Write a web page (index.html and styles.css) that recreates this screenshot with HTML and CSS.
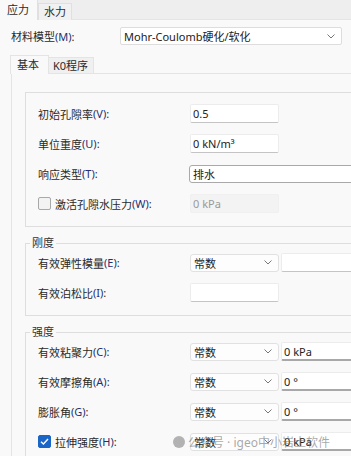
FILE: index.html
```html
<!DOCTYPE html>
<html lang="zh-CN">
<head>
    <meta charset="UTF-8">
    <title>材料属性</title>
    <link rel="stylesheet" href="styles.css">
</head>
<body>

<div class="window">
    <!-- Top tabs -->
    <div class="tabbar">
        <div class="tab active">应力</div>
        <div class="tab">水力</div>
    </div>

    <div class="page">
        <div class="model-row">
            <span class="label">材料模型<span class="key">(M)</span>:</span>
            <div class="select model-select">
                <span>Mohr-Coulomb硬化/软化</span>
                <svg class="chevron" width="8" height="5" viewBox="0 0 8 5"><path d="M0.5 0.5 L4 4 L7.5 0.5" fill="none" stroke="#777" stroke-width="1"/></svg>
            </div>
        </div>

        <div class="subtabs">
            <div class="subtab active">基本</div>
            <div class="subtab">K0程序</div>
        </div>

        <div class="panel">
            <!-- General -->
            <div class="group first">
                <div class="row">
                    <span class="label">初始孔隙率<span class="key">(V)</span>:</span>
                    <div class="input">0.5</div>
                </div>
                <div class="row">
                    <span class="label">单位重度<span class="key">(U)</span>:</span>
                    <div class="input">0 kN/m³</div>
                </div>
                <div class="row">
                    <span class="label">响应类型<span class="key">(T)</span>:</span>
                    <div class="select response">
                        <span>排水</span>
                    </div>
                </div>
                <div class="row">
                    <span class="label"><span class="checkbox"></span>激活孔隙水压力<span class="key">(W)</span>:</span>
                    <div class="input disabled">0 kPa</div>
                </div>
            </div>

            <!-- Stiffness -->
            <fieldset class="group">
                <legend>刚度</legend>
                <div class="row">
                    <span class="label">有效弹性模量<span class="key">(E)</span>:</span>
                    <div class="select small">
                        <span>常数</span>
                        <svg class="chevron" width="8" height="5" viewBox="0 0 8 5"><path d="M0.5 0.5 L4 4 L7.5 0.5" fill="none" stroke="#777" stroke-width="1"/></svg>
                    </div>
                    <div class="input value"></div>
                </div>
                <div class="row">
                    <span class="label">有效泊松比<span class="key">(I)</span>:</span>
                    <div class="input"></div>
                </div>
            </fieldset>

            <!-- Strength -->
            <fieldset class="group">
                <legend>强度</legend>
                <div class="row">
                    <span class="label">有效粘聚力<span class="key">(C)</span>:</span>
                    <div class="select small">
                        <span>常数</span>
                        <svg class="chevron" width="8" height="5" viewBox="0 0 8 5"><path d="M0.5 0.5 L4 4 L7.5 0.5" fill="none" stroke="#777" stroke-width="1"/></svg>
                    </div>
                    <div class="input value dark">0 kPa</div>
                </div>
                <div class="row">
                    <span class="label">有效摩擦角<span class="key">(A)</span>:</span>
                    <div class="select small">
                        <span>常数</span>
                        <svg class="chevron" width="8" height="5" viewBox="0 0 8 5"><path d="M0.5 0.5 L4 4 L7.5 0.5" fill="none" stroke="#777" stroke-width="1"/></svg>
                    </div>
                    <div class="input value dark">0 °</div>
                </div>
                <div class="row">
                    <span class="label">膨胀角<span class="key">(G)</span>:</span>
                    <div class="select small">
                        <span>常数</span>
                        <svg class="chevron" width="8" height="5" viewBox="0 0 8 5"><path d="M0.5 0.5 L4 4 L7.5 0.5" fill="none" stroke="#777" stroke-width="1"/></svg>
                    </div>
                    <div class="input value dark">0 °</div>
                </div>
                <div class="row">
                    <span class="label"><span class="checkbox checked"><svg width="11" height="11" viewBox="0 0 11 11"><path d="M2 5.8 L4.4 8 L9 3" fill="none" stroke="#fff" stroke-width="1.4"/></svg></span>拉伸强度<span class="key">(H)</span>:</span>
                    <div class="select small">
                        <span>常数</span>
                        <svg class="chevron" width="8" height="5" viewBox="0 0 8 5"><path d="M0.5 0.5 L4 4 L7.5 0.5" fill="none" stroke="#777" stroke-width="1"/></svg>
                    </div>
                    <div class="input value dark">0 kPa</div>
                </div>
            </fieldset>
        </div>
    </div>

    <!-- Watermark overlay -->
    <div class="watermark">
        <span class="wm-icon"></span>
        <span>公众号 · igeo中小岩土软件</span>
    </div>
</div>

</body>
</html>
```

FILE: styles.css
```css
/* General body styling */
body {
    margin: 0;
    font-family: 'Noto Sans', 'Noto Sans CJK SC', sans-serif;
    font-size: 11px;
    color: #2a2a2a;
    background-color: #f9f9f9;
}

.window {
    position: relative;
    width: 351px;
    height: 456px;
    overflow: hidden;
    background-color: #f9f9f9;
}

/* Top tab strip */
.tabbar {
    display: flex;
    align-items: flex-end;
    height: 20px;
    background-color: #eeeeee;
    border-bottom: 1px solid #e4e4e4;
    box-sizing: border-box;
}

.tab {
    height: 17px;
    width: 34px;
    line-height: 16px;
    padding-left: 5px;
    box-sizing: border-box;
    background-color: #f1f1f1;
    border: 1px solid #e0e0e0;
    border-bottom: none;
    margin-bottom: -1px;
}

.tab.active {
    height: 21px;
    width: 38px;
    line-height: 20px;
    padding-left: 6px;
    background-color: #f9f9f9;
    border-color: #f9f9f9 #e0e0e0 #f9f9f9 #f9f9f9;
}

/* Page */
.page {
    padding-top: 7px;
}

.model-row {
    display: flex;
    align-items: center;
    height: 18px;
    padding-left: 11px;
}

.model-row .label {
    width: 109px;
}

.key {
    color: #243070;
}

/* Selects */
.select {
    display: flex;
    align-items: center;
    justify-content: space-between;
    height: 18px;
    box-sizing: border-box;
    padding: 0 6px 0 3px;
    background-color: #fdfdfd;
    border: 1px solid #e1e1e1;
    border-radius: 3px;
    color: #222;
    font-size: 11px;
}

.model-select {
    width: 222px;
    background-color: #ffffff;
    border-color: #dddddd;
    border-radius: 2px;
}

.select.small {
    width: 89px;
}

.select.response {
    width: 200px;
    border-color: #a9a9a9;
    background-color: #ffffff;
    margin-left: -1px;
}

.chevron {
    flex-shrink: 0;
}

/* Sub tabs */
.subtabs {
    display: flex;
    align-items: flex-end;
    height: 19px;
    margin-top: 9px;
    padding-left: 10px;
}

.subtab {
    height: 16px;
    line-height: 15px;
    box-sizing: border-box;
    padding: 0 5px 0 4px;
    white-space: nowrap;
    background-color: #f0f0f0;
    border: 1px solid #e4e4e4;
    border-left: none;
    border-bottom: none;
}

.subtab.active {
    width: 39px;
    height: 19px;
    line-height: 17px;
    padding-left: 6px;
    background-color: #f9f9f9;
    border-left: 1px solid #e4e4e4;
    margin-bottom: -1px;
}

/* Inner panel */
.panel {
    width: 420px;
    margin-left: 11px;
    padding: 18px 0 0 13px;
    border-top: 1px solid #e4e4e4;
    border-left: 1px solid #e4e4e4;
}

.group {
    width: 400px;
    margin: 9px 0 0 0;
    padding: 3px 0 13px 12px;
    border: 1px solid #dedede;
    min-width: 0;
    display: flex;
    flex-direction: column;
    gap: 11px;
}

.group.first {
    margin-top: 0;
    padding-top: 11px;
}

.group legend {
    padding: 0 2px;
    margin-left: -8px;
    line-height: 14px;
    color: #333;
}

/* Rows */
.row {
    display: flex;
    align-items: center;
    height: 19px;
}

.row .label {
    display: flex;
    align-items: center;
    width: 152px;
    flex-shrink: 0;
}

/* Inputs */
.input {
    width: 89px;
    height: 19px;
    box-sizing: border-box;
    padding-left: 2px;
    line-height: 17px;
    background-color: #ffffff;
    border: 1px solid #ececec;
    border-bottom-color: #c4c4c4;
    border-radius: 2px;
    color: #222;
    flex-shrink: 0;
}

.input.value {
    width: 120px;
    margin-left: 2px;
}

.input.dark {
    border-bottom: 2px solid #a8a8a8;
}

.input.disabled {
    background-color: #f3f3f3;
    border-color: #f0f0f0;
    color: #9a9a9a;
}

/* Checkboxes */
.checkbox {
    display: inline-flex;
    align-items: center;
    justify-content: center;
    width: 13px;
    height: 13px;
    box-sizing: border-box;
    margin-right: 4px;
    background-color: #f3f3f3;
    border: 1px solid #a8a8a8;
    border-radius: 2px;
}

.checkbox.checked {
    background-color: #1a66c6;
    border-color: #1a66c6;
}

/* Watermark */
.watermark {
    position: absolute;
    left: 173px;
    top: 433px;
    display: flex;
    align-items: center;
    gap: 3px;
    font-size: 12px;
    color: rgba(110, 110, 110, 0.6);
    pointer-events: none;
}

.wm-icon {
    width: 12px;
    height: 12px;
    border-radius: 50%;
    background-color: rgba(120, 120, 120, 0.55);
}
```
